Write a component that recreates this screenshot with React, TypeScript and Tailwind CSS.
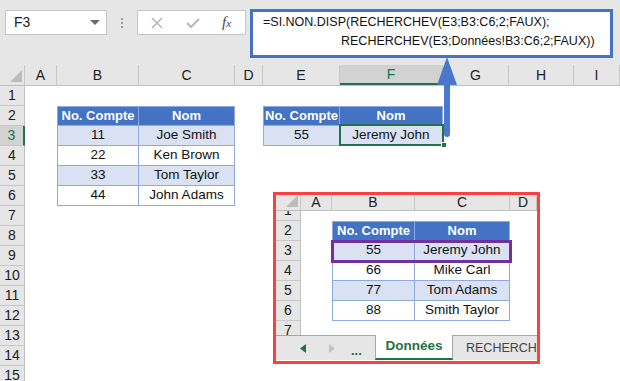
import React from "react";

type Kind = "head" | "odd" | "even";
type TCell = { text: string; kind: Kind; first?: boolean; top?: boolean };

const mainCols = [25, 32, 82, 96, 28, 77, 103, 66, 65, 46];
const mainLetters = ["", "A", "B", "C", "D", "E", "F", "G", "H", "I"];

const insetCols = [25, 31, 83, 95, 27];
const insetLetters = ["", "A", "B", "C", "D"];

const font = { fontFamily: '"Liberation Sans", Arial, sans-serif' };

// key = "col,row" (col index into the letters array)
const mainTable: Record<string, TCell> = {
  "2,2": { text: "No. Compte", kind: "head", first: true, top: true },
  "3,2": { text: "Nom", kind: "head", top: true },
  "2,3": { text: "11", kind: "odd", first: true },
  "3,3": { text: "Joe Smith", kind: "odd" },
  "2,4": { text: "22", kind: "even", first: true },
  "3,4": { text: "Ken Brown", kind: "even" },
  "2,5": { text: "33", kind: "odd", first: true },
  "3,5": { text: "Tom Taylor", kind: "odd" },
  "2,6": { text: "44", kind: "even", first: true },
  "3,6": { text: "John Adams", kind: "even" },
  "5,2": { text: "No. Compte", kind: "head", first: true, top: true },
  "6,2": { text: "Nom", kind: "head", top: true },
  "5,3": { text: "55", kind: "odd", first: true },
  "6,3": { text: "Jeremy John", kind: "odd" },
};

const insetTable: Record<string, TCell> = {
  "2,2": { text: "No. Compte", kind: "head", first: true, top: true },
  "3,2": { text: "Nom", kind: "head", top: true },
  "2,3": { text: "55", kind: "odd", first: true },
  "3,3": { text: "Jeremy John", kind: "odd" },
  "2,4": { text: "66", kind: "even", first: true },
  "3,4": { text: "Mike Carl", kind: "even" },
  "2,5": { text: "77", kind: "odd", first: true },
  "3,5": { text: "Tom Adams", kind: "odd" },
  "2,6": { text: "88", kind: "even", first: true },
  "3,6": { text: "Smith Taylor", kind: "even" },
};

function TableCell({ c, w }: { c: TCell; w: number }) {
  const bg =
    c.kind === "head"
      ? "bg-[#4472c4] text-white font-bold text-[13px]"
      : c.kind === "odd"
      ? "bg-[#d9e1f2] text-[#111] text-[13.5px]"
      : "bg-white text-[#111] text-[13.5px]";
  return (
    <div
      className={`h-full flex items-center justify-center shrink-0 border-r border-b border-[#8ea9db] whitespace-nowrap overflow-hidden ${bg} ${
        c.first ? "border-l" : ""
      } ${c.top ? "border-t" : ""}`}
      style={{ width: w }}
    >
      {c.text}
    </div>
  );
}

function Corner() {
  return (
    <svg width="25" height="20" className="block">
      <polygon points="10,17 22,17 22,5" fill="#bdbdbd" />
    </svg>
  );
}

function ColHeader({ cols, letters, active, h }: { cols: number[]; letters: string[]; active?: number; h: string }) {
  return (
    <div className={`flex ${h} bg-[#e6e6e6] border-b border-[#bfbfbf]`}>
      {cols.map((w, i) => (
        <div
          key={i}
          className={`shrink-0 flex items-center justify-center border-r border-[#c8c8c8] text-[14px] ${
            i === active ? "bg-[#d2d2d2] text-[#217346] border-b-2 border-b-[#217346]" : "text-[#222]"
          } ${i === 0 ? "items-end justify-end" : ""}`}
          style={{ width: w }}
        >
          {i === 0 ? <Corner /> : letters[i]}
        </div>
      ))}
    </div>
  );
}

function SheetRow({
  r,
  cols,
  table,
  active,
}: {
  r: number;
  cols: number[];
  table: Record<string, TCell>;
  active?: boolean;
}) {
  return (
    <div className="flex h-[20px]">
      {cols.map((w, i) => {
        if (i === 0)
          return (
            <div
              key={i}
              className={`shrink-0 flex items-center justify-center border-b border-[#c8c8c8] text-[14px] ${
                active
                  ? "bg-[#d2d2d2] text-[#217346] border-r-2 border-r-[#217346]"
                  : "bg-[#e6e6e6] text-[#222] border-r border-r-[#bfbfbf]"
              }`}
              style={{ width: w }}
            >
              {r}
            </div>
          );
        const c = table[`${i},${r}`];
        if (c) return <TableCell key={i} c={c} w={w} />;
        return <div key={i} className="shrink-0 bg-white" style={{ width: w }} />;
      })}
    </div>
  );
}

function TopBar() {
  return (
    <div className="h-[65px] bg-[#e6e6e6] relative flex items-start pt-[9px]">
      <div className="ml-[5px] mt-[1px] w-[102px] h-[25px] bg-white border border-[#c6c6c6] flex items-center justify-between pl-[8px] pr-[6px]">
        <span className="text-[14px] text-[#222]">F3</span>
        <svg width="10" height="6">
          <polygon points="0,0 10,0 5,5" fill="#6b6b6b" />
        </svg>
      </div>
      <div className="w-[30px] h-[25px] mt-[1px] flex flex-col items-center justify-center gap-[2px]">
        <span className="w-[2px] h-[2px] bg-[#a0a0a0]" />
        <span className="w-[2px] h-[2px] bg-[#a0a0a0]" />
        <span className="w-[2px] h-[2px] bg-[#a0a0a0]" />
      </div>
      <div className="w-[109px] h-[25px] mt-[1px] bg-white border border-[#c6c6c6] flex items-center">
        <svg width="12" height="12" className="ml-[13px]">
          <path d="M1 1 L11 11 M11 1 L1 11" stroke="#b8b8b8" strokeWidth="1.6" />
        </svg>
        <svg width="14" height="12" className="ml-[23px]">
          <path d="M1 6 L5 10 L13 2" stroke="#b8b8b8" strokeWidth="2" fill="none" />
        </svg>
        <span
          className="ml-[22px] text-[15px] italic text-[#444] leading-none"
          style={{ fontFamily: '"Liberation Serif", "Times New Roman", serif' }}
        >
          f<span className="text-[11px]">x</span>
        </span>
      </div>
      <div className="ml-[4px] w-[363px] h-[49px] bg-white border-[3px] border-[#4472c4] pl-[10px] pt-[1px] text-[12.5px] leading-[19px] text-[#111]">
        <div>=SI.NON.DISP(RECHERCHEV(E3;B3:C6;2;FAUX);</div>
        <div className="pl-[78px]">RECHERCHEV(E3;Données!B3:C6;2;FAUX))</div>
      </div>
    </div>
  );
}

function Arrow() {
  return (
    <svg className="absolute left-[430px] top-[50px] pointer-events-none" width="34" height="95">
      <polygon points="17,7 7,35 27,35" fill="#4a78cc" />
      <line x1="17" y1="30" x2="17" y2="84" stroke="#4a78cc" strokeWidth="6" strokeLinecap="round" />
    </svg>
  );
}

function TabBar() {
  return (
    <div className="flex h-[25px] bg-[#e6e6e6] text-[13px]">
      <div className="w-[99px] shrink-0 border-t border-[#a6a6a6] flex items-center">
        <svg width="6" height="9" className="ml-[24px]">
          <polygon points="6,0 6,9 0,4.5" fill="#217346" />
        </svg>
        <svg width="6" height="9" className="ml-[23px]">
          <polygon points="0,0 0,9 6,4.5" fill="#c4c4c4" />
        </svg>
        <span className="ml-[16px] font-bold text-[#217346] leading-none mt-[4px]">...</span>
      </div>
      <div className="w-[78px] shrink-0 bg-white border-l border-r border-[#a6a6a6] border-b-2 border-b-[#217346] flex items-center justify-center font-bold text-[#217346] text-[13.5px]">
        Données
      </div>
      <div className="flex-1 border-t border-[#a6a6a6] flex items-center pl-[13px] text-[12.5px] text-[#444] whitespace-nowrap overflow-hidden">
        RECHERCHEV
      </div>
    </div>
  );
}

function Inset() {
  return (
    <div className="absolute left-[273px] top-[192px] w-[267px] h-[172px] border-[3px] border-[#f94144] bg-white overflow-hidden flex flex-col">
      <ColHeader cols={insetCols} letters={insetLetters} h="h-[16px]" />
      <div className="h-[10px] overflow-hidden">
        <div className="-mt-[10px]">
          <SheetRow r={1} cols={insetCols} table={insetTable} />
        </div>
      </div>
      <div className="relative">
        {[2, 3, 4, 5, 6].map((r) => (
          <SheetRow key={r} r={r} cols={insetCols} table={insetTable} />
        ))}
        <div className="absolute left-[55px] top-[19px] w-[181px] h-[23px] border-[3px] border-[#7030a0]" />
      </div>
      <div className="h-[14px] overflow-hidden">
        <SheetRow r={7} cols={insetCols} table={insetTable} />
      </div>
      <TabBar />
    </div>
  );
}

export default function App() {
  const rows = Array.from({ length: 15 }, (_, i) => i + 1);
  return (
    <div className="w-[620px] h-[381px] overflow-hidden bg-white relative" style={font}>
      <TopBar />
      <ColHeader cols={mainCols} letters={mainLetters} active={6} h="h-[21px]" />
      {rows.map((r) => (
        <SheetRow key={r} r={r} cols={mainCols} table={mainTable} active={r === 3} />
      ))}
      {/* selected cell F3 */}
      <div className="absolute left-[339px] top-[124px] w-[105px] h-[22px] border-2 border-[#217346] pointer-events-none" />
      <div className="absolute left-[441px] top-[142px] w-[6px] h-[6px] bg-[#217346] border border-white" />
      <Arrow />
      <Inset />
    </div>
  );
}
